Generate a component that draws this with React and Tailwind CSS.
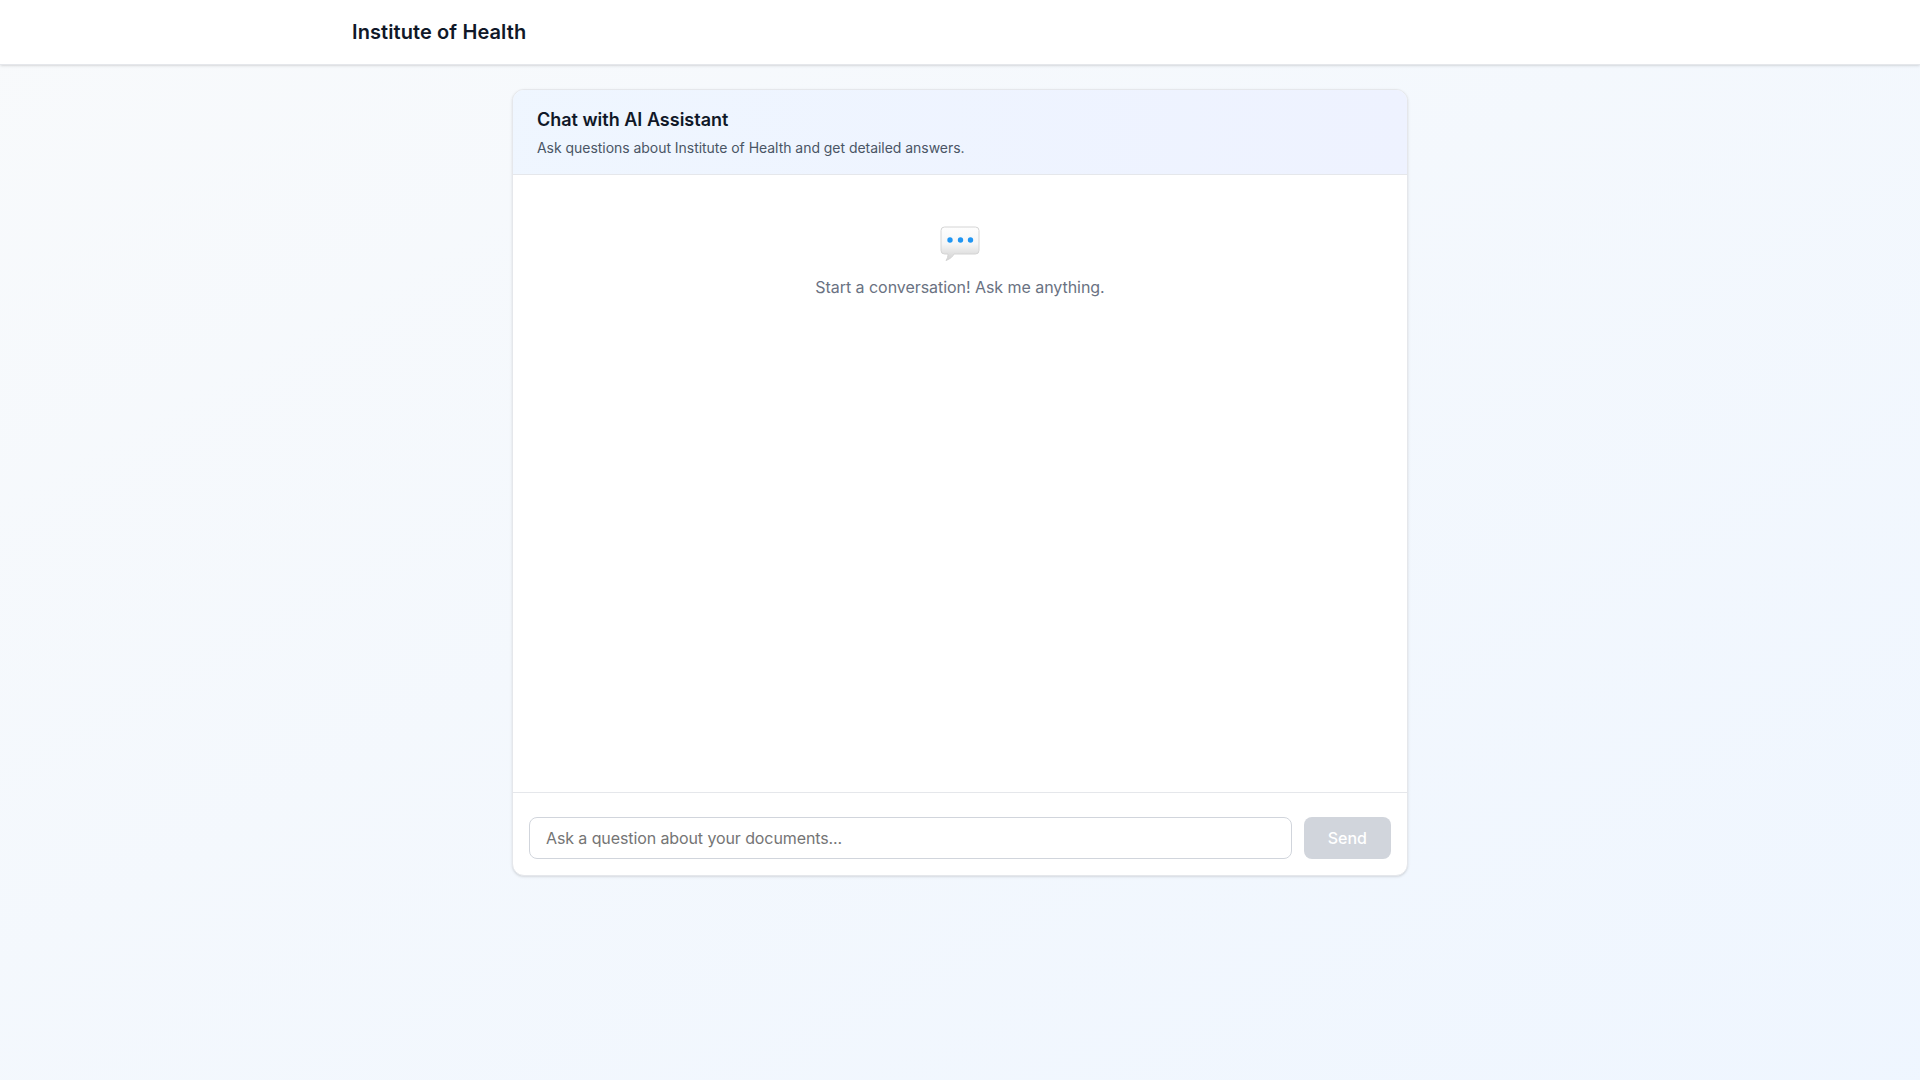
export default function App() {
  return (
    <div className="min-h-screen flex flex-col bg-gradient-to-br from-slate-50 to-blue-50 font-['Inter',sans-serif] antialiased">
      <nav className="bg-white border-b border-gray-200 shadow-sm h-[65px]">
        <div className="max-w-7xl mx-auto px-8 h-16 flex items-center">
          <h1 className="text-xl font-semibold text-gray-900 tracking-[0.1px]">Institute of Health</h1>
        </div>
      </nav>
      <main className="max-w-4xl w-full mx-auto py-6">
        <div className="bg-white rounded-xl border border-gray-200 shadow-sm overflow-hidden flex flex-col">
          <div className="bg-gradient-to-r from-blue-50 to-indigo-50 border-b border-gray-200 px-6 py-4">
            <h2 className="text-lg font-semibold text-gray-900">Chat with AI Assistant</h2>
            <p className="text-sm text-gray-600 mt-1 tracking-[-0.04px]">Ask questions about Institute of Health and get detailed answers.</p>
          </div>
          <div className="h-[617px] p-4">
            <div className="text-center pt-8">
              <svg className="mx-auto mt-px mb-[11px] w-10 h-10" viewBox="0 0 40 40">
                <defs>
                  <linearGradient id="b" x1="0" y1="0" x2="0" y2="1">
                    <stop offset="0" stopColor="#fefefe" />
                    <stop offset="0.5" stopColor="#f6f6f6" />
                    <stop offset="0.85" stopColor="#dcdcdc" />
                    <stop offset="1" stopColor="#d6d6d6" />
                  </linearGradient>
                </defs>
                <path d="M4.500 3h31a3.500 3.500 0 0 1 3.500 3.500v20a3.500 3.500 0 0 1-3.500 3.500H14c-1.500 3-4 5-8 6.500 1.500-2 2-4 2-6.500H4.500A3.500 3.500 0 0 1 1 26.500v-20A3.500 3.500 0 0 1 4.500 3z" fill="url(#b)" stroke="#d4d4d4" strokeWidth="1" />
                <circle cx="10" cy="16" r="2.700" fill="#2196f3" />
                <circle cx="20.500" cy="16" r="2.700" fill="#2196f3" />
                <circle cx="30.500" cy="16" r="2.700" fill="#2196f3" />
              </svg>
              <p className="text-gray-500 tracking-[-0.05px]">Start a conversation! Ask me anything.</p>
            </div>
          </div>
          <div className="border-t border-gray-200 px-4 py-6 pb-4 flex gap-3">
            <input
              className="flex-1 h-[42px] border border-gray-300 rounded-lg px-4 text-base outline-none tracking-[-0.1px] placeholder:text-[#757575]"
              placeholder="Ask a question about your documents..."
            />
            <button disabled className="h-[42px] px-6 bg-gray-300 text-white rounded-lg font-medium">Send</button>
          </div>
        </div>
      </main>
    </div>
  );
}
